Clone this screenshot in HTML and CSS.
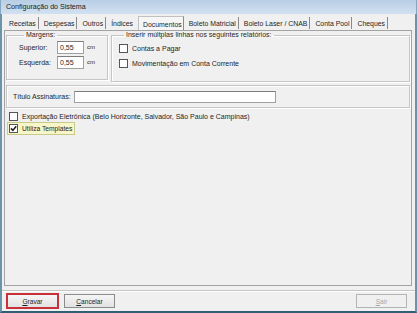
FILE: index.html
```html
<!DOCTYPE html>
<html>
<head>
<meta charset="utf-8">
<link rel="stylesheet" href="styles.css">
</head>
<body>
<div class="window">
  <div class="titlebar">Configuração do Sistema</div>
  <div class="client">
    <div class="tabs">
      <span class="tab">Receitas</span>
      <span class="tab">Despesas</span>
      <span class="tab">Outros</span>
      <span class="tab pre">Índices</span>
      <span class="tab active">Documentos</span>
      <span class="tab">Boleto Matricial</span>
      <span class="tab">Boleto Laser / CNAB</span>
      <span class="tab">Conta Pool</span>
      <span class="tab">Cheques</span>
    </div>
    <div class="page">
      <div class="row-top">
        <fieldset class="group margens">
          <legend>Margens:</legend>
          <div class="field"><label>Superior:</label><span class="input small">0,55</span><span class="unit">cm</span></div>
          <div class="field"><label>Esquerda:</label><span class="input small">0,55</span><span class="unit">cm</span></div>
        </fieldset>
        <fieldset class="group inserir">
          <legend>Inserir múltplas linhas nos seguintes relatórios:</legend>
          <div class="check"><span class="box"></span>Contas a Pagar</div>
          <div class="check"><span class="box"></span>Movimentação em Conta Corrente</div>
        </fieldset>
      </div>
      <div class="group titulo">
        <label>Título Assinaturas:</label><span class="input wide"></span>
      </div>
      <div class="check export"><span class="box"></span>Exportação Eletrônica (Belo Horizonte, Salvador, São Paulo e Campinas)</div>
      <div class="templates"><div class="check focused"><span class="box"><svg width="7" height="7" viewBox="0 0 7 7"><path d="M1 3.4 L2.9 5.4 L6.2 1.2" fill="none" stroke="#1f1f1f" stroke-width="1.6"/></svg></span>Utiliza Templates</div></div>
    </div>
    <div class="footer">
      <button class="btn primary"><u>G</u>ravar</button>
      <button class="btn"><u>C</u>ancelar</button>
      <span class="spacer"></span>
      <button class="btn disabled"><u>S</u>air</button>
    </div>
  </div>
</div>
</body>
</html>
```
FILE: styles.css
```css
* { box-sizing: border-box; }
html, body { margin: 0; padding: 0; }
body {
  width: 417px; height: 313px; overflow: hidden;
  font-family: "Liberation Sans", Arial, sans-serif;
  font-size: 7px; color: #1e1e1e;
  background: #3d6e84;
}
.window {
  width: 417px; height: 313px;
  display: flex; flex-direction: column;
  border-left: 2px solid #6a94aa;
  border-right: 2px solid #6a94aa;
  border-bottom: 2px solid #2f5f74;
  background: #f0f0f0;
}
.titlebar {
  height: 14px; flex: none;
  background: linear-gradient(#b8cee5, #d2e1f1);
  margin: 0 -2px;
  padding: 3px 0 0 5px;
  line-height: 9px;
  font-size: 7.1px; color: #1a1a1a;
  border-left: 1px solid #87a7c2;
  border-right: 1px solid #87a7c2;
}
.client { flex: 1; display: flex; flex-direction: column; padding: 0 2px 0 2px; }
.tabs {
  display: flex; height: 16px; padding-left: 0; align-items: flex-end;
  white-space: nowrap; font-size: 6.9px;
}
.tab {
  height: 12px; line-height: 11px;
  padding: 1px 2px 0 5px;
  border-right: 1px solid #8a8a8a;
  margin-bottom: 1px;
}
.tab.pre { border-right: none; padding-right: 5px; }
.tab.active {
  background: #f6f6f6;
  border: 1px solid #c0c0c0;
  border-bottom: none;
  height: 14px; margin-bottom: 0;
  padding: 2px 1px 0 4px;
  border-right-color: #8a8a8a;
}
.page {
  flex: 1;
  border: 1px solid #a3a3a3;
  background: #f0f0f0;
  padding: 0 1px 0 1px;
  margin-right: 1px;
}
.row-top { display: flex; gap: 3px; }
.group {
  border: 1px solid #c6c6c6;
  box-shadow: inset 1px 1px 0 #fff, 1px 1px 0 #fff;
  margin: 0;
}
fieldset.group { min-width: 0; }
legend { padding: 0 2px; margin-left: 5px; line-height: 8px; white-space: nowrap; }
.margens { width: 102px; height: 49px; padding: 2px 0 0 12px; }
.inserir { flex: 1; height: 51px; padding: 2px 0 0 7px; }
.field { display: flex; align-items: flex-start; height: 15px; }
.field label { width: 38px; line-height: 13px; }
.input {
  display: inline-block; height: 13px; background: #fff;
  border: 1px solid #a0a0a0; border-top-color: #7c7c7c;
  padding: 0 0 0 2px; line-height: 11px;
}
.small { width: 27px; }
.unit { margin-left: 3px; font-size: 6px; line-height: 13px; }
.check { display: flex; align-items: center; height: 15px; white-space: nowrap; }
.box {
  width: 9px; height: 9px; border: 1px solid #555; background: #fff;
  margin-right: 4px; flex: none; display: flex; align-items: center; justify-content: center;
}
.titulo {
  display: flex; align-items: center; height: 23px; margin-top: 3px;
  padding-left: 6px;
}
.titulo label { margin-right: 3px; }
.wide { width: 202px; height: 12px; }
.check.export { height: 11px; margin-top: 3px; margin-left: 3px; }
.templates { display: flex; margin-left: 1px; font-size: 6.7px; }
.check.focused {
  height: 13px; background: #f6f6c8; border: 1px solid #c9c98a;
  padding: 0 2px 0 1px;
}
.footer {
  height: 21px; flex: none; display: flex; align-items: flex-start;
  border-top: 1px solid #c4c4c4; box-shadow: inset 0 1px 0 #fff;
  margin-top: 4px; padding: 3px 8px 0 5px; gap: 6px;
  margin-left: -2px; margin-right: -2px;
}
.spacer { flex: 1; }
.btn {
  width: 51px; height: 14px; font: inherit; font-size: 6.6px;
  background: linear-gradient(#f5f5f5, #e2e2e2);
  border: 1px solid #8c8c8c; padding: 0; color: #1e1e1e;
}
.btn u { text-decoration: underline; }
.btn.primary { outline: 2px solid #c8303a; outline-offset: -1px; border-color: #a04040; }
.btn.disabled { color: #a8a8a8; border-color: #b4b4b4; background: #f0f0f0; }
```
